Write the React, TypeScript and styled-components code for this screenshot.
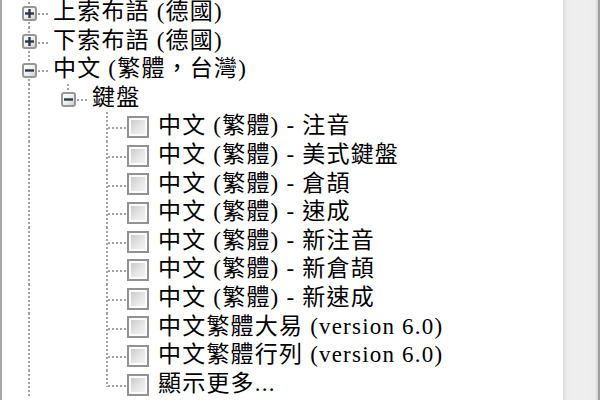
import React from "react";
import styled, { createGlobalStyle, css } from "styled-components";

type Connector = "passBox" | "upBox" | "tee" | "elbow";
type Mark = "plus" | "minus" | "check";

interface TreeNode {
  label: string;
  guides: boolean[];
  connector: Connector;
  mark: Mark;
}

const ROW_H = 28.6;
const DOT = "#a3a3a3";
const LINE_Y = 15;

const vDots = `repeating-linear-gradient(to bottom, ${DOT} 0 2px, transparent 2px 4px)`;
const hDots = `repeating-linear-gradient(to right, ${DOT} 0 2px, transparent 2px 4px)`;

const leaf = (label: string, last = false): TreeNode => ({
  label,
  guides: [true, false],
  connector: last ? "elbow" : "tee",
  mark: "check",
});

const NODES: TreeNode[] = [
  { label: "上索布語 (德國)", guides: [], connector: "passBox", mark: "plus" },
  { label: "下索布語 (德國)", guides: [], connector: "passBox", mark: "plus" },
  { label: "中文 (繁體，台灣)", guides: [], connector: "passBox", mark: "minus" },
  { label: "鍵盤", guides: [true], connector: "upBox", mark: "minus" },
  leaf("中文 (繁體) - 注音"),
  leaf("中文 (繁體) - 美式鍵盤"),
  leaf("中文 (繁體) - 倉頡"),
  leaf("中文 (繁體) - 速成"),
  leaf("中文 (繁體) - 新注音"),
  leaf("中文 (繁體) - 新倉頡"),
  leaf("中文 (繁體) - 新速成"),
  leaf("中文繁體大易 (version 6.0)"),
  leaf("中文繁體行列 (version 6.0)"),
  leaf("顯示更多...", true),
];

const GlobalStyle = createGlobalStyle`
  html, body {
    margin: 0;
    padding: 0;
    background: #fff;
  }
  body {
    width: 600px;
    height: 400px;
    overflow: hidden;
  }
`;

const Window = styled.div`
  display: flex;
  width: 600px;
  height: 400px;
  background: #fff;
`;

const TreeArea = styled.div`
  flex: 1;
  overflow: hidden;
  border-left: 2px solid #a8a8a8;
  padding-left: 8px;
`;

const Rows = styled.div`
  margin-top: -2px;
`;

const Row = styled.div`
  display: flex;
  align-items: center;
  height: ${ROW_H}px;
`;

const Guide = styled.span<{ $line: boolean }>`
  flex: none;
  width: 39px;
  align-self: stretch;
  ${({ $line }) =>
    $line &&
    css`
      background: ${vDots} 18px 0 / 2px 100% no-repeat;
    `}
`;

const connectorBg = (kind: Connector) => {
  const horizontal = `${hDots} 20px ${LINE_Y}px / 19px 2px no-repeat`;
  if (kind === "passBox" || kind === "tee")
    return `${horizontal}, ${vDots} 18px 0 / 2px 100% no-repeat`;
  if (kind === "upBox") return `${horizontal}, ${vDots} 18px 0 / 2px 12px no-repeat`;
  return `${horizontal}, ${vDots} 18px 0 / 2px ${LINE_Y + 2}px no-repeat`;
};

const ConnectorCell = styled.span<{ $kind: Connector }>`
  flex: none;
  width: 39px;
  align-self: stretch;
  display: flex;
  align-items: center;
  padding-left: 12px;
  box-sizing: border-box;
  background: ${({ $kind }) => connectorBg($kind)};
`;

const Expander = styled.span`
  width: 15px;
  height: 15px;
  margin-top: 2px;
  box-sizing: border-box;
  border: 2px solid #979797;
  border-radius: 3px;
  background: linear-gradient(135deg, #ffffff 0%, #eeeeee 55%, #cfcfcf 100%);
  display: flex;
  align-items: center;
  justify-content: center;
`;

const CheckBox = styled.span`
  flex: none;
  width: 22px;
  height: 22px;
  margin-top: 1px;
  box-sizing: border-box;
  border: 2px solid #929292;
  box-shadow: inset 0 0 0 2px #fbfbfb;
  background: linear-gradient(135deg, #c4c4c4 0%, #e6e6e6 55%, #f7f7f7 100%);
`;

const Label = styled.span<{ $leaf: boolean }>`
  padding-left: ${({ $leaf }) => ($leaf ? "9px" : "4px")};
  font-family: "Liberation Serif", "Noto Sans CJK TC", serif;
  font-size: 23px;
  letter-spacing: 1.2px;
  line-height: ${ROW_H}px;
  color: #000;
  white-space: nowrap;
`;

const Scrollbar = styled.div`
  flex: none;
  width: 35px;
  border-right: 2px solid #9d9d9d;
  background: linear-gradient(
    to right,
    #dcdcdc 0,
    #ececec 4px,
    #efefef 50%,
    #ececec calc(100% - 3px),
    #d4d4d4 100%
  );
`;

const Sign: React.FC<{ open: boolean }> = ({ open }) => (
  <svg width="9" height="9" viewBox="0 0 9 9">
    <rect x="0" y="3.3" width="9" height="2.4" fill="#2c3751" />
    {!open && <rect x="3.3" y="0" width="2.4" height="9" fill="#2c3751" />}
  </svg>
);

const TreeRow: React.FC<{ node: TreeNode }> = ({ node }) => {
  const isLeaf = node.mark === "check";
  return (
    <Row>
      {node.guides.map((g, i) => (
        <Guide key={i} $line={g} />
      ))}
      <ConnectorCell $kind={node.connector}>
        {!isLeaf && (
          <Expander>
            <Sign open={node.mark === "minus"} />
          </Expander>
        )}
      </ConnectorCell>
      {isLeaf && <CheckBox />}
      <Label $leaf={isLeaf}>{node.label}</Label>
    </Row>
  );
};

export default function App() {
  return (
    <>
      <GlobalStyle />
      <Window>
        <TreeArea>
          <Rows>
            {NODES.map((n, i) => (
              <TreeRow key={i} node={n} />
            ))}
          </Rows>
        </TreeArea>
        <Scrollbar />
      </Window>
    </>
  );
}
